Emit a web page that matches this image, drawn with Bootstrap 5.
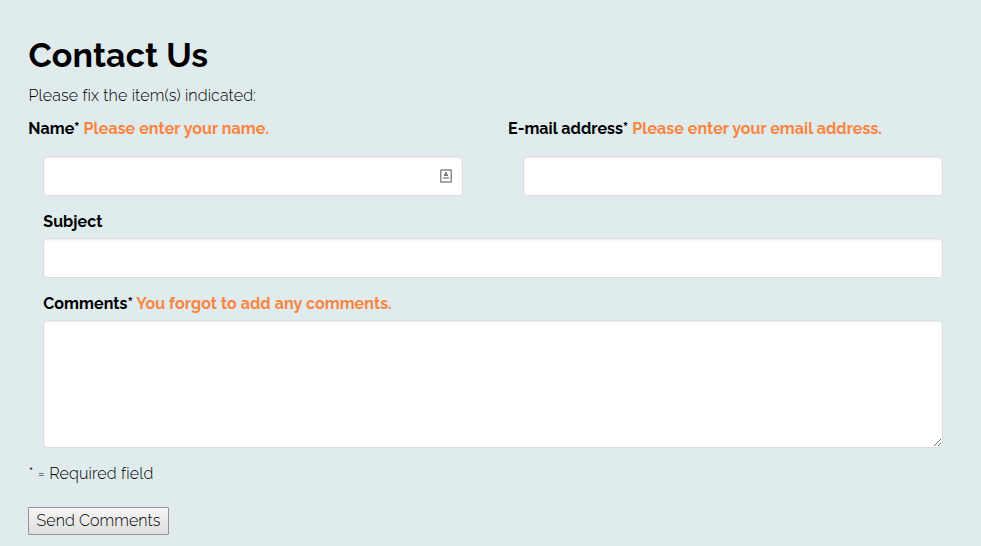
<!DOCTYPE html>
<html lang="en">
<head>
<meta charset="utf-8">
<meta name="viewport" content="width=device-width, initial-scale=1">
<title>Contact Us</title>
<link href="https://cdn.jsdelivr.net/npm/bootstrap@5.3.0/dist/css/bootstrap.min.css" rel="stylesheet">
<style>
body { background: #dfebec; color: #000; font-family: Raleway, Lato, "Open Sans", sans-serif; font-size: 16px; font-weight: 300; line-height: 23px; overflow: hidden; }
.contact-page { width: 930px; margin-left: 28px; padding-top: 35px; }
h1 { font-size: 34px; font-weight: 700; line-height: 40px; padding-left: .5px; letter-spacing: .06px; }
.field-label { display: block; font-weight: 700; line-height: 23px; white-space: nowrap; letter-spacing: .07px; padding-left: .3px; }
.email-label { padding-left: 0; letter-spacing: .05px; }
.field-error { color: #fb853f; }
.form-control, .form-control:focus { height: 40px; border: 1px solid #ddd; border-radius: 4px; box-shadow: inset 0 1px 2px rgba(0,0,0,.09); background: #fff; }
textarea.form-control, textarea.form-control:focus { height: 128px; resize: vertical; }
.intro { margin: 9px 0 10px; padding-left: .4px; letter-spacing: .13px; }
.pair { gap: 30px; }
.field-pad { padding: 0 15px; }
.stacked { padding-top: 14px; }
.stacked .field-label { margin-bottom: 5px; }
.autofill { right: 25px; top: 13px; }
.required-note { margin: 14px 0 22px; padding-left: .4px; letter-spacing: .15px; }
.send { font: inherit; color: #000; width: 141px; height: 28px; padding: 0; border: 1px solid #959595; border-radius: 1px; background: linear-gradient(#f6f6f6, #dedede); line-height: 26px; letter-spacing: .05px; }
</style>
</head>
<body>
<main class="contact-page">
  <h1 class="mb-0">Contact Us</h1>
  <p class="intro">Please fix the item(s) indicated:</p>
  <form novalidate>
    <div class="d-flex pair">
      <div class="flex-fill w-50">
        <label class="field-label" for="name">Name* <span class="field-error">Please enter your name.</span></label>
        <div class="field-pad position-relative mt-3">
          <input class="form-control" id="name" type="text">
          <svg class="autofill position-absolute" width="13" height="14" viewBox="0 0 13 14" aria-hidden="true"><rect x=".75" y="1" width="10.5" height="12" rx=".5" fill="#fff" stroke="#8b8b8b" stroke-width="1.5"/><path d="M5 3h2v2h1v2H4V5h1z" fill="#808080"/><path d="M3 8h6v2H3z" fill="#aaa"/></svg>
        </div>
      </div>
      <div class="flex-fill w-50">
        <label class="field-label email-label" for="email">E-mail address* <span class="field-error">Please enter your email address.</span></label>
        <div class="field-pad mt-3"><input class="form-control" id="email" type="email"></div>
      </div>
    </div>
    <div class="field-pad stacked">
      <label class="field-label" for="subject">Subject</label>
      <input class="form-control" id="subject" type="text">
    </div>
    <div class="field-pad stacked">
      <label class="field-label" for="comments">Comments* <span class="field-error">You forgot to add any comments.</span></label>
      <textarea class="form-control d-block" id="comments"></textarea>
    </div>
    <p class="required-note">* = Required field</p>
    <button class="send d-block" type="button">Send Comments</button>
  </form>
</main>
<script src="https://cdn.jsdelivr.net/npm/bootstrap@5.3.0/dist/js/bootstrap.bundle.min.js"></script>
</body>
</html>
